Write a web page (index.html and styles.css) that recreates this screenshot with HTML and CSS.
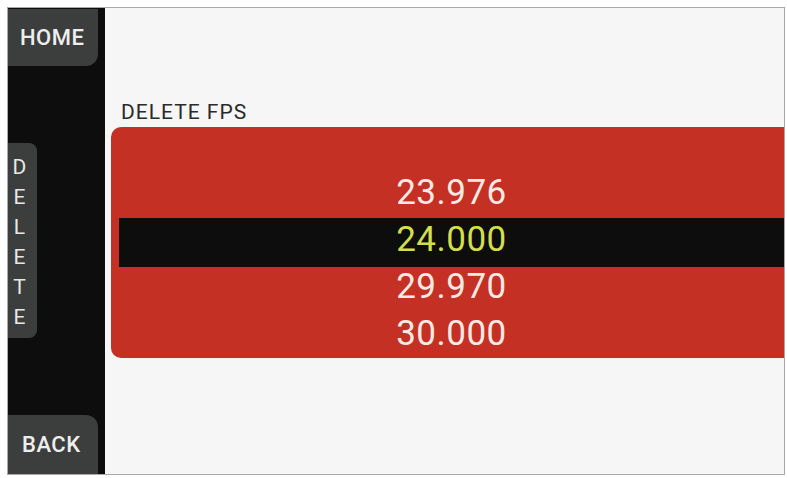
FILE: index.html
```html
<!DOCTYPE html>
<html lang="en">
  <head>
    <meta charset="UTF-8" />
    <title>Delete FPS</title>
    <link rel="stylesheet" href="styles.css">
  </head>
  <body>
    <div class="device">
      <div class="sidebar">
        <a href="#" class="soft-key home">HOME</a>
        <a href="#" class="side-tab">
          <span>D</span><span>E</span><span>L</span><span>E</span><span>T</span><span>E</span>
        </a>
        <a href="#" class="soft-key back">BACK</a>
      </div>
      <div class="screen">
        <div class="screen-title">DELETE FPS</div>
        <div class="fps-list">
          <div class="fps-row">23.976</div>
          <div class="fps-row selected">24.000</div>
          <div class="fps-row">29.970</div>
          <div class="fps-row">30.000</div>
        </div>
      </div>
    </div>
  </body>
</html>
```
FILE: styles.css
```css
* {
  margin: 0;
  padding: 0;
  box-sizing: border-box;
}

:root {
  --panel-red: #c43024;
  --key-grey: #3c3e3d;
  --bezel: #0d0d0d;
  --screen-bg: #f6f6f6;
}

body {
  font-family: Roboto, 'DejaVu Sans', sans-serif;
  background: #ffffff;
  padding: 7px 2px 3px 7px;
}

.device {
  width: 778px;
  height: 468px;
  border: 1px solid #a9a9a9;
  display: flex;
}

/* Left soft keys */
.sidebar {
  width: 97px;
  background: var(--bezel);
  display: flex;
  flex-direction: column;
  justify-content: space-between;
  align-items: flex-start;
}

.soft-key {
  width: 90px;
  display: flex;
  align-items: center;
  background: var(--key-grey);
  color: #eeeeee;
  text-decoration: none;
  font-size: 22px;
  font-weight: 500;
  letter-spacing: 0.5px;
}

.home {
  height: 57px;
  margin-top: 1px;
  padding-left: 12px;
  border-bottom-right-radius: 12px;
}

.back {
  height: 59px;
  padding-left: 14px;
  border-top-right-radius: 12px;
}

.side-tab {
  width: 29px;
  height: 195px;
  margin-bottom: 1px;
  background: var(--key-grey);
  border-radius: 0 8px 8px 0;
  color: #e8e8e8;
  text-decoration: none;
  font-size: 21px;
  display: flex;
  flex-direction: column;
  align-items: center;
  padding: 9px 6px 0 0;
}

.side-tab span {
  height: 30px;
  line-height: 30px;
}

/* Main screen */
.screen {
  flex: 1;
  background: var(--screen-bg);
  padding-top: 92px;
}

.screen-title {
  font-size: 21px;
  line-height: 24px;
  letter-spacing: 1px;
  color: #2a2a2a;
  padding-left: 16px;
  margin-bottom: 3px;
}

.fps-list {
  margin-left: 6px;
  background: var(--panel-red);
  border-radius: 10px 0 0 10px;
  padding: 44px 0 0 8px;
  height: 231px;
}

.fps-row {
  height: 47px;
  line-height: 43px;
  text-align: center;
  font-size: 35px;
  color: #fbe9e4;
  letter-spacing: 0.5px;
}

.fps-row.selected {
  background: var(--bezel);
  height: 49px;
  margin-bottom: -2px;
  color: #d2de4c;
}
```
